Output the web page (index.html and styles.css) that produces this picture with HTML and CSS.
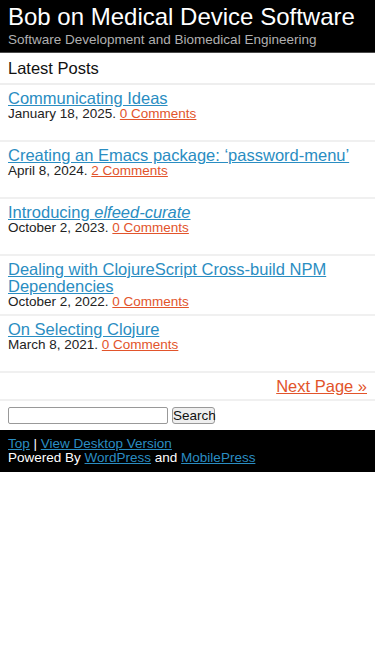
FILE: index.html
```html
<!DOCTYPE html>
<html lang="en">
<head>
    <meta charset="UTF-8">
    <meta name="viewport" content="width=device-width, initial-scale=1.0">
    <title>Bob on Medical Device Software</title>
    <link rel="stylesheet" href="styles.css">
</head>
<body>
    <div class="header">
        <h1>Bob on Medical Device Software</h1>
        <div class="tagline">Software Development and Biomedical Engineering</div>
    </div>

    <div class="page-title">Latest Posts</div>

    <div class="post">
        <a class="post-title" href="#">Communicating Ideas</a>
        <div class="post-meta">January 18, 2025. <a href="#">0 Comments</a></div>
    </div>

    <div class="post">
        <a class="post-title" href="#">Creating an Emacs package: &lsquo;password-menu&rsquo;</a>
        <div class="post-meta">April 8, 2024. <a href="#">2 Comments</a></div>
    </div>

    <div class="post">
        <a class="post-title" href="#">Introducing <em>elfeed-curate</em></a>
        <div class="post-meta">October 2, 2023. <a href="#">0 Comments</a></div>
    </div>

    <div class="post">
        <a class="post-title" href="#">Dealing with ClojureScript Cross-build NPM Dependencies</a>
        <div class="post-meta">October 2, 2022. <a href="#">0 Comments</a></div>
    </div>

    <div class="post">
        <a class="post-title" href="#">On Selecting Clojure</a>
        <div class="post-meta">March 8, 2021. <a href="#">0 Comments</a></div>
    </div>

    <div class="pagination">
        <a href="#">Next Page &raquo;</a>
    </div>

    <form class="search" onsubmit="return false">
        <input type="text" class="search-input">
        <button type="submit" class="search-button">Search</button>
    </form>

    <div class="footer">
        <div><a href="#">Top</a> | <a href="#">View Desktop Version</a></div>
        <div>Powered By <a href="#">WordPress</a> and <a href="#">MobilePress</a></div>
    </div>
</body>
</html>
```

FILE: styles.css
```css
body {
    font-family: "Liberation Sans", Arial, sans-serif;
    background-color: #fff;
    color: #222;
    margin: 0;
}

a {
    color: #2a8dc2;
}

.header {
    background-color: #000;
    padding: 3px 8px 4px;
    border-bottom: 1px solid #4a4a4a;
}

.header h1 {
    margin: 0;
    font-size: 24px;
    line-height: 28px;
    font-weight: normal;
    color: #fff;
}

.tagline {
    font-size: 13.5px;
    line-height: 17px;
    color: #b0b0b0;
}

.page-title {
    font-size: 16.5px;
    line-height: 19px;
    padding: 6px 8px 5px;
    color: #111;
    border-bottom: 2px solid #eee;
}

.post {
    min-height: 44px;
    padding: 5px 8px 6px;
    border-bottom: 2px solid #f0f0f0;
}

.post-title {
    display: block;
    font-size: 16.5px;
    line-height: 17px;
}

.post-meta {
    font-size: 13.5px;
    line-height: 13px;
    color: #222;
}

.post-meta a,
.pagination a {
    color: #e2542b;
}

.pagination {
    text-align: right;
    font-size: 16.5px;
    line-height: 19px;
    padding: 4px 8px 3px;
    border-bottom: 2px solid #f0f0f0;
}

.search {
    display: flex;
    align-items: center;
    gap: 4px;
    margin: 0;
    padding: 6px 8px 6px;
}

.search-input {
    width: 160px;
    height: 17px;
    box-sizing: border-box;
    margin: 0;
    padding: 0 3px;
    border: 1px solid #999;
    border-radius: 2px;
    background: #fff;
}

.search-button {
    width: 43px;
    height: 17px;
    box-sizing: border-box;
    margin: 0;
    padding: 0;
    font-family: "Liberation Sans", Arial, sans-serif;
    font-size: 13.5px;
    line-height: 15px;
    color: #111;
    background: #efefef;
    border: 1px solid #999;
    border-radius: 3px;
}

.footer {
    background-color: #000;
    color: #fff;
    font-size: 13.5px;
    line-height: 13.5px;
    padding: 7px 8px 8px;
}
```
